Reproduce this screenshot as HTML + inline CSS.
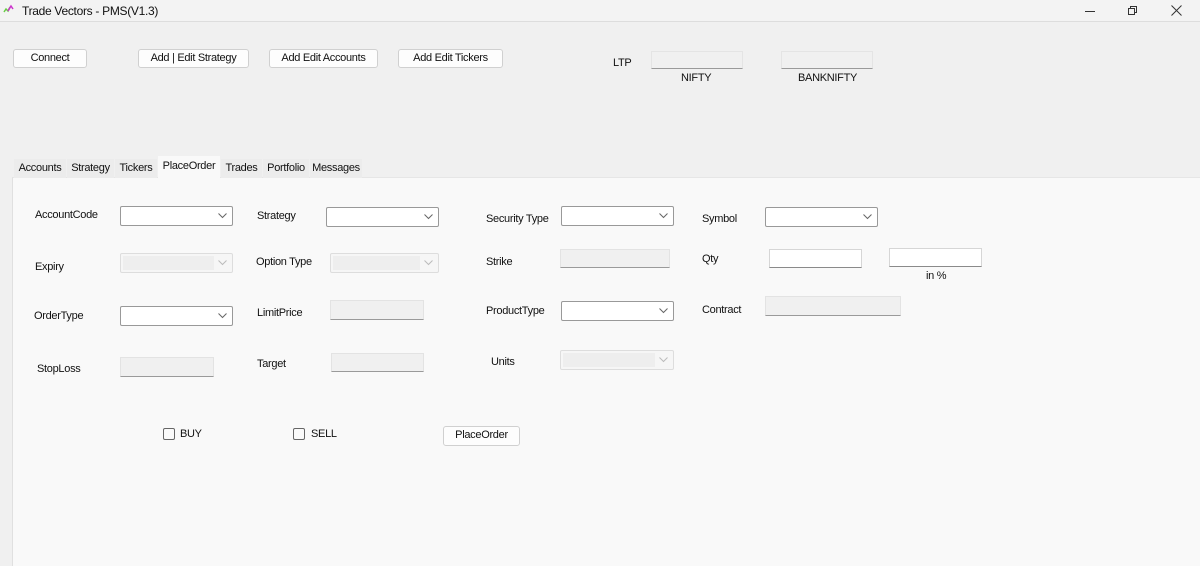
<!DOCTYPE html>
<html><head><meta charset="utf-8"><style>
*{margin:0;padding:0;box-sizing:border-box}
body{width:1200px;height:566px;background:#f0f0f0;font-family:"Liberation Sans",sans-serif;font-size:11px;color:#111;position:relative;overflow:hidden;letter-spacing:-0.3px}
.a{position:absolute;white-space:nowrap}
.title{left:0;top:0;width:1200px;height:22px;background:#f3f3f3;border-bottom:1px solid #ddd}
.btn{position:absolute;background:#fdfdfd;border:1px solid #d0d0d0;border-radius:3px;text-align:center;line-height:17px;font-size:11px}
.tb{position:absolute;background:#f0f0f0;border:1px solid #e4e4e4;border-bottom:1px solid #9a9a9a}
.txt{position:absolute;background:#fff;border:1px solid #d6d6d6;border-bottom:1px solid #8a8a8a}
.dis{position:absolute;background:#f0f0f0;border:1px solid #e3e3e3;border-bottom:1px solid #9a9a9a}
.cb{position:absolute;background:#fff;border:1px solid #999;border-radius:2px;height:20px}
.cb.d{background:#f6f6f6;border-color:#ddd}
.cb.d::before{content:"";position:absolute;left:2px;top:2px;right:18px;bottom:2px;background:#eee}
.cb svg{position:absolute;right:5px;top:6px}
.tab{position:absolute;top:159px;height:19px;background:#ececec;line-height:19px;text-align:center;font-size:11px}
.chk{position:absolute;width:12px;height:12px;border:1px solid #666;border-radius:2px;background:#fafafa}
</style></head><body>
<div class="a title"></div>
<svg class="a" style="left:3px;top:4px" width="12" height="12" viewBox="0 0 12 12"><path d="M1 8 L3 5 L5 7 L7 3" stroke="#6c4" stroke-width="1.5" fill="none"/><path d="M5 7 L8 2 L10 5" stroke="#c3c" stroke-width="1.5" fill="none"/></svg>
<div class="a" style="left:22px;top:4px;font-size:12px">Trade Vectors - PMS(V1.3)</div>
<div class="a" style="left:1085px;top:11px;width:10px;height:1px;background:#333"></div>
<svg class="a" style="left:1127px;top:5px" width="11" height="11" viewBox="0 0 11 11"><rect x="1.5" y="3.5" width="6" height="6" fill="none" stroke="#333"/><path d="M3.5 3.5V1.5H9.5V7.5H7.5" fill="none" stroke="#333"/></svg>
<svg class="a" style="left:1171px;top:5px" width="11" height="11" viewBox="0 0 11 11"><path d="M0.5 0.5L10.5 10.5M10.5 0.5L0.5 10.5" stroke="#333"/></svg>

<div class="btn" style="left:13px;top:49px;width:74px;height:19px">Connect</div>
<div class="btn" style="left:138px;top:49px;width:111px;height:19px">Add | Edit Strategy</div>
<div class="btn" style="left:269px;top:49px;width:109px;height:19px">Add Edit Accounts</div>
<div class="btn" style="left:398px;top:49px;width:105px;height:19px">Add Edit Tickers</div>
<div class="a" style="left:613px;top:57px">LTP</div>
<div class="tb" style="left:651px;top:51px;width:92px;height:18px"></div>
<div class="tb" style="left:781px;top:51px;width:92px;height:18px"></div>
<div class="a" style="left:681px;top:72px">NIFTY</div>
<div class="a" style="left:798px;top:72px">BANKNIFTY</div>

<div class="a" style="left:12px;top:177px;width:1188px;height:389px;background:#f9f9f9;border-left:1px solid #e0e0e0;border-top:1px solid #e6e6e6"></div>
<div class="tab" style="left:14px;width:52px">Accounts</div>
<div class="tab" style="left:67px;width:47px">Strategy</div>
<div class="tab" style="left:115px;width:42px">Tickers</div>
<div class="tab" style="left:158px;width:62px;top:156px;height:22px;background:#f9f9f9;line-height:20px">PlaceOrder</div>
<div class="tab" style="left:221px;width:41px">Trades</div>
<div class="tab" style="left:263px;width:46px">Portfolio</div>
<div class="tab" style="left:310px;width:52px">Messages</div>

<div class="a" style="left:35px;top:209px">AccountCode</div>
<div class="cb" style="left:120px;top:206px;width:113px"><svg width="9" height="6"><path d="M0.5 0.5L4.5 4.5L8.5 0.5" stroke="#666" fill="none"/></svg></div>
<div class="a" style="left:257px;top:210px">Strategy</div>
<div class="cb" style="left:326px;top:207px;width:113px"><svg width="9" height="6"><path d="M0.5 0.5L4.5 4.5L8.5 0.5" stroke="#666" fill="none"/></svg></div>
<div class="a" style="left:486px;top:213px">Security Type</div>
<div class="cb" style="left:561px;top:206px;width:113px"><svg width="9" height="6"><path d="M0.5 0.5L4.5 4.5L8.5 0.5" stroke="#666" fill="none"/></svg></div>
<div class="a" style="left:702px;top:213px">Symbol</div>
<div class="cb" style="left:765px;top:207px;width:113px"><svg width="9" height="6"><path d="M0.5 0.5L4.5 4.5L8.5 0.5" stroke="#666" fill="none"/></svg></div>

<div class="a" style="left:35px;top:261px">Expiry</div>
<div class="cb d" style="left:120px;top:253px;width:113px"><svg width="9" height="6"><path d="M0.5 0.5L4.5 4.5L8.5 0.5" stroke="#bbb" fill="none"/></svg></div>
<div class="a" style="left:256px;top:256px">Option Type</div>
<div class="cb d" style="left:330px;top:253px;width:109px"><svg width="9" height="6"><path d="M0.5 0.5L4.5 4.5L8.5 0.5" stroke="#bbb" fill="none"/></svg></div>
<div class="a" style="left:486px;top:256px">Strike</div>
<div class="dis" style="left:560px;top:249px;width:110px;height:19px"></div>
<div class="a" style="left:702px;top:253px">Qty</div>
<div class="txt" style="left:769px;top:249px;width:93px;height:19px"></div>
<div class="txt" style="left:889px;top:248px;width:93px;height:19px"></div>
<div class="a" style="left:926px;top:270px">in %</div>

<div class="a" style="left:34px;top:310px">OrderType</div>
<div class="cb" style="left:120px;top:306px;width:113px"><svg width="9" height="6"><path d="M0.5 0.5L4.5 4.5L8.5 0.5" stroke="#666" fill="none"/></svg></div>
<div class="a" style="left:257px;top:307px">LimitPrice</div>
<div class="dis" style="left:330px;top:300px;width:94px;height:20px"></div>
<div class="a" style="left:486px;top:305px">ProductType</div>
<div class="cb" style="left:561px;top:301px;width:113px"><svg width="9" height="6"><path d="M0.5 0.5L4.5 4.5L8.5 0.5" stroke="#666" fill="none"/></svg></div>
<div class="a" style="left:702px;top:304px">Contract</div>
<div class="dis" style="left:765px;top:296px;width:136px;height:20px"></div>

<div class="a" style="left:37px;top:363px">StopLoss</div>
<div class="dis" style="left:120px;top:357px;width:94px;height:20px"></div>
<div class="a" style="left:257px;top:358px">Target</div>
<div class="dis" style="left:331px;top:353px;width:93px;height:19px"></div>
<div class="a" style="left:491px;top:356px">Units</div>
<div class="cb d" style="left:560px;top:350px;width:114px"><svg width="9" height="6"><path d="M0.5 0.5L4.5 4.5L8.5 0.5" stroke="#bbb" fill="none"/></svg></div>

<div class="chk" style="left:163px;top:428px"></div>
<div class="a" style="left:180px;top:428px">BUY</div>
<div class="chk" style="left:293px;top:428px"></div>
<div class="a" style="left:311px;top:428px">SELL</div>
<div class="btn" style="left:443px;top:426px;width:77px;height:20px">PlaceOrder</div>
</body></html>
